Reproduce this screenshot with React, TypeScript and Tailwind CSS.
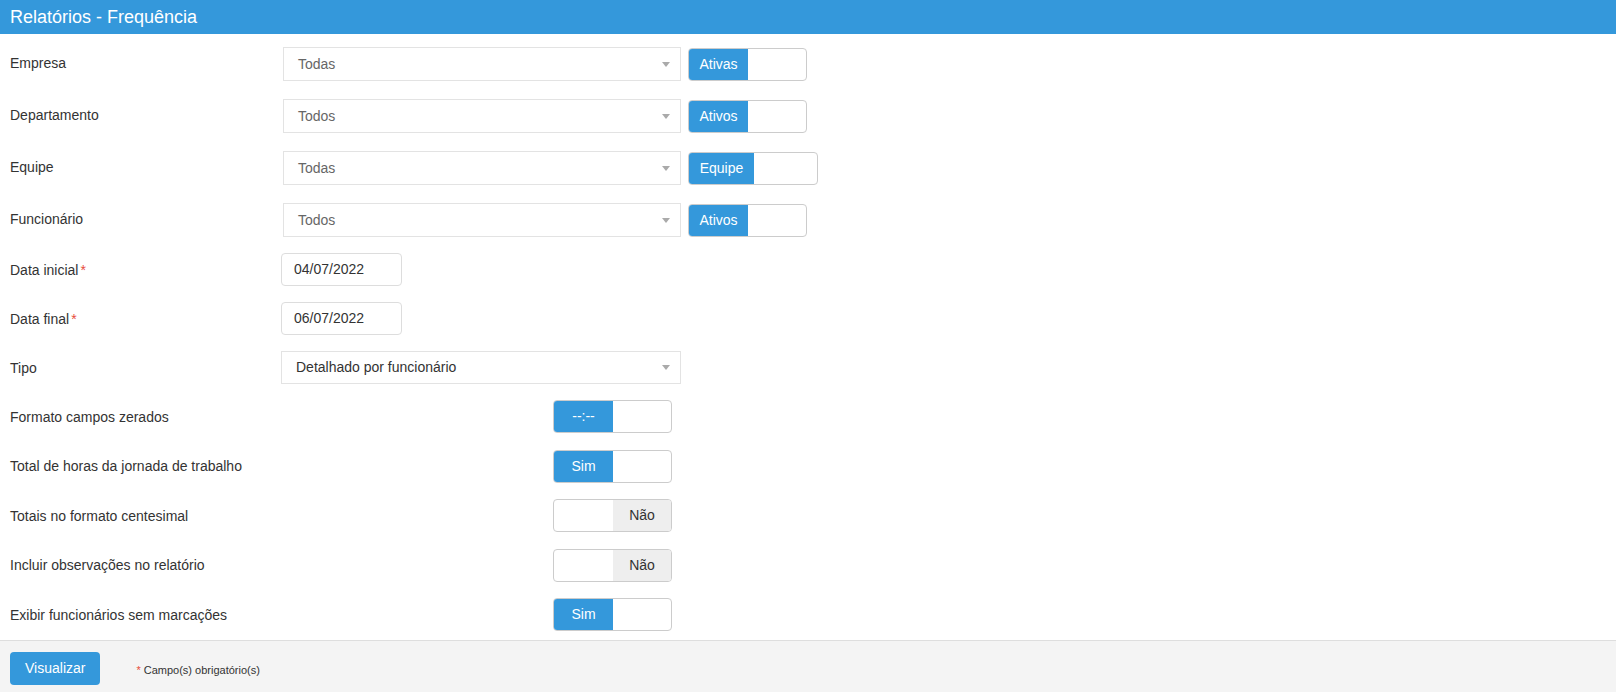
import React from 'react';

const font = { fontFamily: '"Liberation Sans", Arial, sans-serif' };

function Select({ value, muted = true, width = 'w-[398px]' }: { value: string; muted?: boolean; width?: string }) {
  return (
    <div
      className={`${width} h-full flex items-center justify-between border border-[#e3e3e3] bg-white pl-[14px] pr-[10px] text-[14px] ${muted ? 'text-[#666]' : 'text-[#333]'}`}
    >
      <span>{value}</span>
      <span className="w-0 h-0 border-l-[4px] border-r-[4px] border-t-[5px] border-l-transparent border-r-transparent border-t-[#aaa]" />
    </div>
  );
}

function Switch({ label, on = true, width = 'w-[119px]', half = 'w-[59px]' }: { label: string; on?: boolean; width?: string; half?: string }) {
  return (
    <div className={`${width} h-[33px] flex border border-[#ccc] rounded-[4px] overflow-hidden bg-white text-[14px]`}>
      {on ? (
        <>
          <div className={`${half} h-full bg-[#3498db] text-white flex items-center justify-center`}>{label}</div>
          <div className="flex-1" />
        </>
      ) : (
        <>
          <div className={`${half} h-full`} />
          <div className="flex-1 h-full bg-[#eeeeee] text-[#333] flex items-center justify-center">{label}</div>
        </>
      )}
    </div>
  );
}

function DateInput({ value }: { value: string }) {
  return (
    <div className="w-[121px] h-full flex items-center border border-[#ddd] rounded-[4px] bg-white px-[12px] text-[14px] text-[#333]">
      {value}
    </div>
  );
}

function Label({ text, required }: { text: string; required?: boolean }) {
  return (
    <span className="text-[14px] text-[#333]">
      {text}
      {required && <span className="text-[#e74c3c] ml-[2px]">*</span>}
    </span>
  );
}

export default function App() {
  const selectRows = [
    { label: 'Empresa', value: 'Todas', sw: 'Ativas' },
    { label: 'Departamento', value: 'Todos', sw: 'Ativos' },
    { label: 'Equipe', value: 'Todas', sw: 'Equipe', wide: true },
    { label: 'Funcionário', value: 'Todos', sw: 'Ativos' },
  ];

  const boolRows = [
    { label: 'Formato campos zerados', value: '--:--', on: true },
    { label: 'Total de horas da jornada de trabalho', value: 'Sim', on: true },
    { label: 'Totais no formato centesimal', value: 'Não', on: false },
    { label: 'Incluir observações no relatório', value: 'Não', on: false },
    { label: 'Exibir funcionários sem marcações', value: 'Sim', on: true },
  ];

  return (
    <div className="w-full min-h-screen bg-white flex flex-col" style={font}>
      <div className="h-[34px] bg-[#3498db] flex items-center px-[10px]">
        <h1 className="text-white text-[18px] leading-none">Relatórios - Frequência</h1>
      </div>

      <div className="pt-[13px] pb-[9px]">
        {selectRows.map((r) => (
          <div key={r.label} className="flex items-center h-[34px] mb-[18px]">
            <div className="w-[283px] pl-[10px] pb-[3px]">
              <Label text={r.label} />
            </div>
            <div className="h-full">
              <Select value={r.value} />
            </div>
            <div className="ml-[7px]">
              {r.wide ? <Switch label={r.sw} width="w-[130px]" half="w-[65px]" /> : <Switch label={r.sw} />}
            </div>
          </div>
        ))}

        <div className="flex items-center h-[33px] mb-[16px] -mt-[2px]">
          <div className="w-[281px] pl-[10px]">
            <Label text="Data inicial" required />
          </div>
          <div className="h-full">
            <DateInput value="04/07/2022" />
          </div>
        </div>
        <div className="flex items-center h-[33px] mb-[16px]">
          <div className="w-[281px] pl-[10px]">
            <Label text="Data final" required />
          </div>
          <div className="h-full">
            <DateInput value="06/07/2022" />
          </div>
        </div>
        <div className="flex items-center h-[33px] mb-[16px]">
          <div className="w-[281px] pl-[10px]">
            <Label text="Tipo" />
          </div>
          <div className="h-full">
            <Select value="Detalhado por funcionário" muted={false} width="w-[400px]" />
          </div>
        </div>

        {boolRows.map((r, i) => (
          <div key={r.label} className={`flex items-center h-[33px] ${i === boolRows.length - 1 ? '' : 'mb-[16.5px]'}`}>
            <div className="w-[553px] pl-[10px]">
              <Label text={r.label} />
            </div>
            <Switch label={r.value} on={r.on} />
          </div>
        ))}
      </div>

      <div className="flex-1 bg-[#f4f4f4] border-t border-[#dedede] px-[10px] pt-[11px] flex items-start">
        <button className="h-[33px] px-[15px] bg-[#3498db] text-white text-[14px] rounded-[4px]">Visualizar</button>
        <span className="ml-[36px] mt-[10px] text-[11px] text-[#333]">
          <span className="text-[#e74c3c] mr-[3px]">*</span>Campo(s) obrigatório(s)
        </span>
      </div>
    </div>
  );
}
